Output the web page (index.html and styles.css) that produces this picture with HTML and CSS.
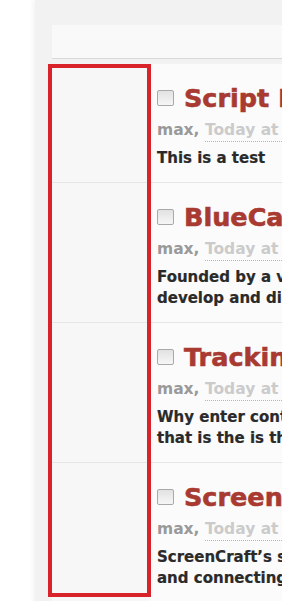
FILE: index.html
```
<!DOCTYPE html>
<html lang="en">
<head>
    <meta charset="UTF-8">
    <meta name="viewport" content="width=device-width, initial-scale=1.0">
    <title>Threads</title>
    <link rel="stylesheet" href="styles.css">
</head>
<body>
    <div class="panel">
        <div class="topbar"></div>

        <ul class="threads">
            <li class="thread">
                <div class="side"></div>
                <div class="main">
                    <h3 class="title"><span class="check"></span>Script Help Needed</h3>
                    <div class="meta"><span class="author">max,</span> <span class="date">Today at 10:42 AM</span></div>
                    <p class="text">This is a test</p>
                </div>
            </li>
            <li class="thread">
                <div class="side"></div>
                <div class="main">
                    <h3 class="title"><span class="check"></span>BlueCat Screenplay</h3>
                    <div class="meta"><span class="author">max,</span> <span class="date">Today at 10:31 AM</span></div>
                    <p class="text">Founded by a veteran team,<br>develop and distribute new</p>
                </div>
            </li>
            <li class="thread">
                <div class="side"></div>
                <div class="main">
                    <h3 class="title"><span class="check"></span>Tracking Board</h3>
                    <div class="meta"><span class="author">max,</span> <span class="date">Today at 10:20 AM</span></div>
                    <p class="text">Why enter contests<br>that is the is the question</p>
                </div>
            </li>
            <li class="thread">
                <div class="side"></div>
                <div class="main">
                    <h3 class="title"><span class="check"></span>ScreenCraft</h3>
                    <div class="meta"><span class="author">max,</span> <span class="date">Today at 10:05 AM</span></div>
                    <p class="text">ScreenCraft&rsquo;s screenwriting<br>and connecting writers</p>
                </div>
            </li>
        </ul>

        <!-- destaque da coluna -->
        <div class="highlight"></div>
    </div>
</body>
</html>
```

FILE: styles.css
```
body {
    margin: 0;
    background-color: #ffffff;
    font-family: "DejaVu Sans", Arial, sans-serif;
}

.panel {
    position: relative;
    margin-left: 35px;
    width: 230px;
    height: 601px;
    padding: 25px 0 0 17px;
    box-sizing: content-box;
    background-color: #f2f2f2;
    box-shadow: -2px 0 4px rgba(0, 0, 0, 0.05);
    overflow: hidden;
}

.topbar {
    height: 33px;
    background-color: #f9f9f9;
    border-bottom: 1px solid #d9d9d9;
    margin-bottom: 5px;
}

.threads {
    list-style-type: none;
    margin: 0;
    padding: 0;
}

.thread {
    display: flex;
    border-bottom: 1px solid #e6e6e6;
}

.side {
    width: 98px;
    flex-shrink: 0;
    background-color: #f7f7f7;
}

.main {
    flex: 1;
    min-width: 0;
    padding: 19px 0 13px 7px;
    background-color: #fbfbfb;
    white-space: nowrap;
    overflow: hidden;
}

.title {
    display: flex;
    align-items: center;
    margin: 0 0 7px 0;
    height: 30px;
    font-size: 25.5px;
    font-weight: bold;
    color: #a83a31;
    -webkit-text-stroke: 0.6px #a83a31; /* mais pesado, como Arial Black */
}

.check {
    width: 15px;
    height: 14px;
    flex-shrink: 0;
    margin-right: 10px;
    border: 1px solid #a9a9a9;
    border-radius: 2px;
    background: linear-gradient(#e2e2e2, #f6f6f6);
    -webkit-text-stroke: 0;
}

.meta {
    height: 20px;
    line-height: 20px;
    font-size: 15.5px;
    font-weight: bold;
    margin-bottom: 8px;
}

.author {
    color: #999999;
}

.date {
    color: #cbcbcb;
    padding-bottom: 2px;
    border-bottom: 1px dotted #b5b5b5;
}

.text {
    margin: 0;
    font-size: 15px;
    line-height: 21px;
    font-weight: bold;
    color: #2a2a2a;
    -webkit-text-stroke: 0.2px #2a2a2a;
}

.highlight {
    position: absolute;
    left: 13px;
    top: 64px;
    width: 95px;
    height: 525px;
    border: 4px solid #d8232b;
}
```
